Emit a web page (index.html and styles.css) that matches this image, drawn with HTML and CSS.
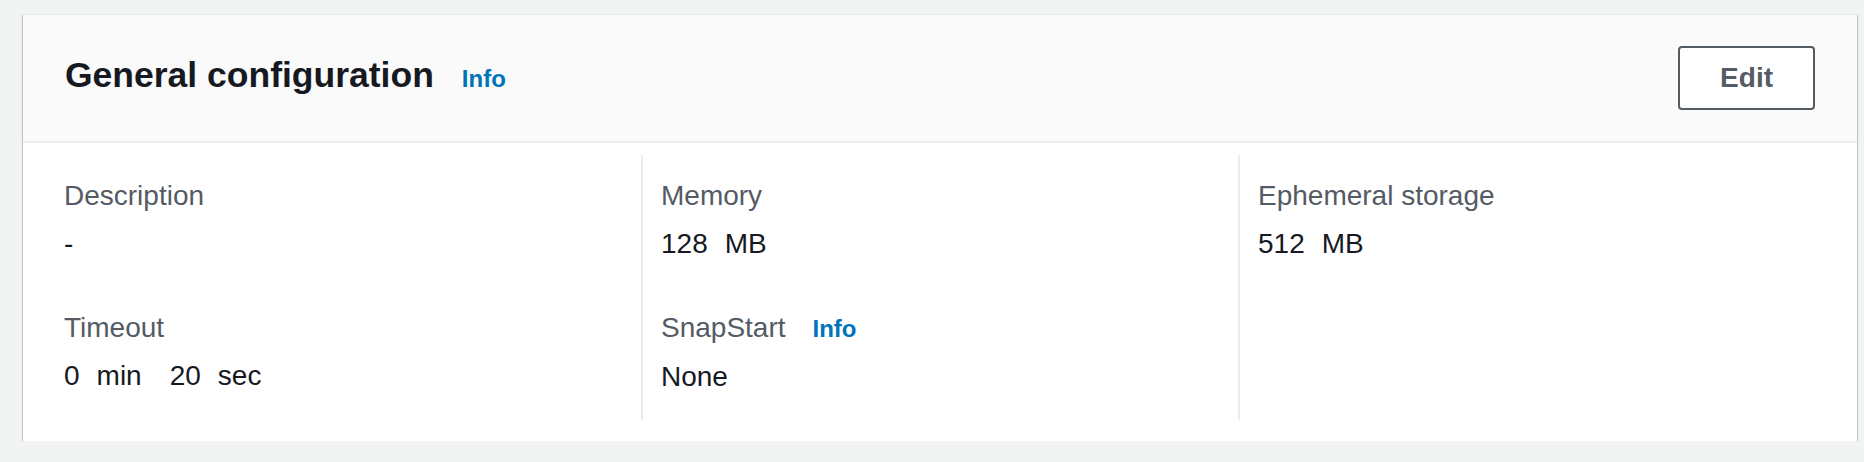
FILE: index.html
```html
<!DOCTYPE html>
<html>
<head>
<meta charset="utf-8">
<title>General configuration</title>
<link rel="stylesheet" href="styles.css">
</head>
<body>
<div class="card">
  <div class="card-header">
    <div class="title-row">
      <h2 class="title">General configuration</h2>
      <a class="info-link info-header" href="#">Info</a>
    </div>
    <button class="btn" type="button">Edit</button>
  </div>
  <div class="card-body">
    <div class="col col-first">
      <div class="kv">
        <div class="label">Description</div>
        <div class="value">-</div>
      </div>
      <div class="kv">
        <div class="label">Timeout</div>
        <div class="value"><span>0</span><span class="sp1">min</span><span class="sp2">20</span><span class="sp1">sec</span></div>
      </div>
    </div>
    <div class="col">
      <div class="kv">
        <div class="label">Memory</div>
        <div class="value"><span>128</span><span class="sp1">MB</span></div>
      </div>
      <div class="kv">
        <div class="label">SnapStart<a class="info-link info-label" href="#">Info</a></div>
        <div class="value">None</div>
      </div>
    </div>
    <div class="col">
      <div class="kv">
        <div class="label">Ephemeral storage</div>
        <div class="value"><span>512</span><span class="sp1">MB</span></div>
      </div>
    </div>
  </div>
</div>
</body>
</html>
```

FILE: styles.css
```css
html, body {
  margin: 0;
  padding: 0;
}

body {
  background: #f2f3f3;
  font-family: "Liberation Sans", Arial, sans-serif;
  color: #16191f;
  padding: 14px 7px 0 23px;
}

.card {
  background: #ffffff;
  border-top: 1px solid #eaeded;
  box-shadow: 0 2px 1px 0 rgba(0, 28, 36, 0.35), 1px 1px 1px 0 rgba(0, 28, 36, 0.15), -1px 1px 1px 0 rgba(0, 28, 36, 0.15);
}

.card-header {
  background: #fafafa;
  height: 126px;
  border-bottom: 2px solid #eaeded;
  padding: 0 42px 0 42px;
  display: flex;
  align-items: center;
  justify-content: space-between;
}

.title-row {
  display: flex;
  align-items: baseline;
  padding-bottom: 6px;
}

.title {
  margin: 0;
  font-size: 35.5px;
  line-height: 44px;
  font-weight: 700;
  color: #16191f;
}

.info-link {
  color: #0073bb;
  font-weight: 700;
  font-size: 24px;
  text-decoration: none;
}

.info-header {
  margin-left: 28px;
}

.info-label {
  margin-left: 27px;
}

.btn {
  font-family: "Liberation Sans", Arial, sans-serif;
  background: #ffffff;
  border: 2px solid #545b64;
  border-radius: 4px;
  color: #545b64;
  font-size: 28px;
  font-weight: 700;
  height: 64px;
  line-height: 60px;
  padding: 0 40px;
  margin: 0;
}

.card-body {
  display: grid;
  grid-template-columns: repeat(3, 1fr);
  padding: 12px 22px 21px 21px;
}

.col {
  border-left: 2px solid #eaeded;
  padding: 19px 18px 21px 18px;
}

.col-first {
  border-left-color: transparent;
}

.kv + .kv {
  margin-top: 40px;
}

.label {
  font-size: 28px;
  line-height: 44px;
  color: #545b64;
  margin-bottom: 4px;
}

.value {
  font-size: 28px;
  line-height: 44px;
  color: #16191f;
}

.sp1 {
  margin-left: 17px;
}

.sp2 {
  margin-left: 28px;
}
```
